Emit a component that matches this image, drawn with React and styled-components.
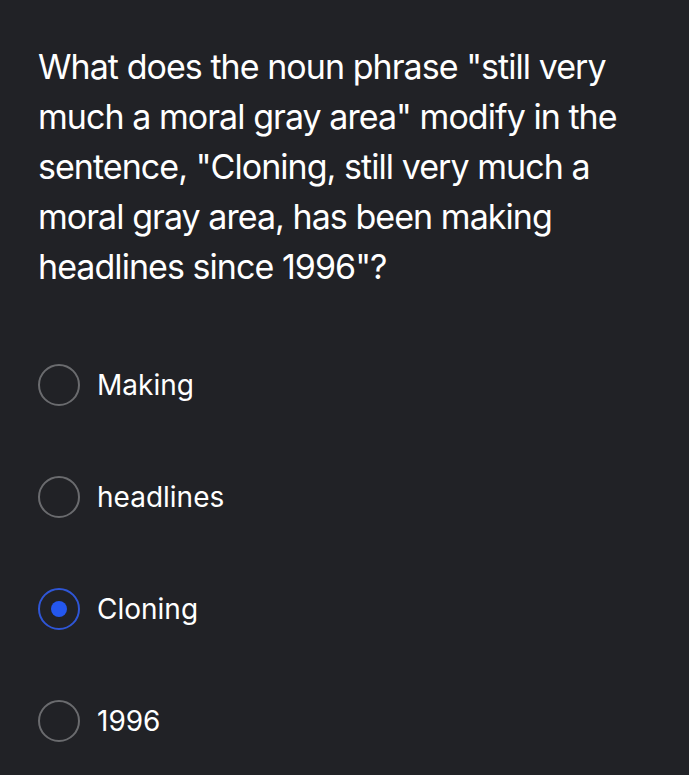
import { createGlobalStyle, styled } from 'styled-components'

const GlobalStyle = createGlobalStyle`
  html, body {
    margin: 0;
    padding: 0;
    background: #212226;
  }
  body {
    font-family: Inter, "Noto Sans", "Liberation Sans", sans-serif;
    color: #fff;
  }
`

const Page = styled.div`
  min-height: 775px;
  padding: 42px 38px 0 38px;
  box-sizing: border-box;
`

const Question = styled.h1`
  margin: 0;
  font-size: 34px;
  font-weight: 400;
  line-height: 50px;
  letter-spacing: -0.95px;
`

const Options = styled.div`
  display: flex;
  flex-direction: column;
  gap: 70px;
  margin-top: 72px;
`

const Option = styled.label`
  display: flex;
  align-items: center;
  gap: 17px;
  height: 42px;
  font-size: 28px;
  cursor: pointer;
`

const Radio = styled.span`
  width: 42px;
  height: 42px;
  box-sizing: border-box;
  border-radius: 50%;
  border: 2px solid ${({ $checked }) => ($checked ? '#2f56d6' : '#6a6b6e')};
  display: flex;
  align-items: center;
  justify-content: center;
  flex-shrink: 0;

  &::after {
    content: '';
    width: 16px;
    height: 16px;
    border-radius: 50%;
    background: #2457ee;
    display: ${({ $checked }) => ($checked ? 'block' : 'none')};
  }
`

const answers = ['Making', 'headlines', 'Cloning', '1996']

const App = () => {
  const selected = 'Cloning'
  return (
    <>
      <GlobalStyle />
      <Page>
        <Question>
          What does the noun phrase "still very much a moral gray area" modify in the sentence,
          "Cloning, still very much a moral gray area, has been making headlines since 1996"?
        </Question>
        <Options>
          {answers.map((a) => (
            <Option key={a}>
              <Radio $checked={a === selected} />
              {a}
            </Option>
          ))}
        </Options>
      </Page>
    </>
  )
}

export default App
